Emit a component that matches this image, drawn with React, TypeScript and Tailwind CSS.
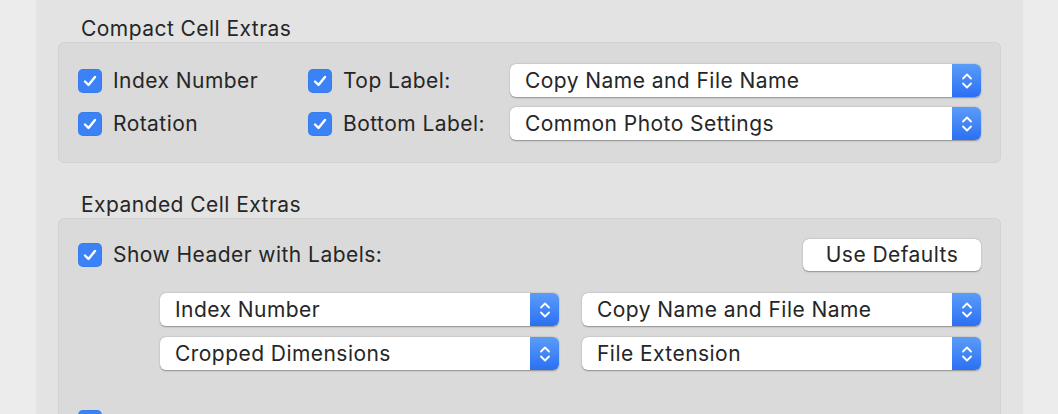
import React from "react";

const font = { fontFamily: "Inter, 'Noto Sans', sans-serif" };

function Check() {
  return (
    <div className="w-[24px] h-[24px] rounded-[5px] bg-[#3a82f6] flex items-center justify-center shrink-0 shadow-[inset_0_0_0_0.5px_rgba(0,0,0,0.08)]">
      <svg width="14" height="12" viewBox="0 0 14 12" fill="none">
        <path d="M2 6.5 L5.5 10 L12 2" stroke="white" strokeWidth="2.4" strokeLinecap="round" strokeLinejoin="round" />
      </svg>
    </div>
  );
}

function Select({ label, className = "" }: { label: string; className?: string }) {
  return (
    <div className={"h-[33px] flex rounded-[6px] bg-white shadow-[0_0.5px_1.5px_rgba(0,0,0,0.35)] " + className}>
      <div className="flex-1 flex items-center pl-[15px] text-[21px] text-[#262626] tracking-[0.45px]">{label}</div>
      <div className="w-[29px] rounded-r-[6px] bg-gradient-to-b from-[#5b9cf8] to-[#2b6ff4] flex items-center justify-center">
        <svg width="12" height="20" viewBox="0 0 12 20" fill="none">
          <path d="M2 7.5 L6 3.5 L10 7.5" stroke="white" strokeWidth="1.8" strokeLinecap="round" strokeLinejoin="round" />
          <path d="M2 12.5 L6 16.5 L10 12.5" stroke="white" strokeWidth="1.8" strokeLinecap="round" strokeLinejoin="round" />
        </svg>
      </div>
    </div>
  );
}

export default function App() {
  return (
    <div className="w-[1058px] h-[414px] overflow-hidden flex bg-[#ececec]" style={font}>
      <div className="w-[36px] shrink-0 bg-[#ececec]" />
      <div className="w-[987px] shrink-0 bg-[#e3e3e3] px-[22px] pt-[17px] text-[#262626]">
        <div className="h-[24px] leading-[24px] pl-[23px] text-[21px] tracking-[0.45px]">Compact Cell Extras</div>
        <div className="mt-px rounded-[6px] border border-[#d2d2d2] bg-[#dadada] pl-[19px] pr-[19px] pt-[21px] pb-[22px] flex flex-col gap-[10px]">
          <div className="h-[33px] flex items-center">
            <div className="w-[230px] flex items-center gap-[11px]">
              <Check />
              <span className="text-[21px] tracking-[0.45px]">Index Number</span>
            </div>
            <div className="w-[202px] flex items-center gap-[11px]">
              <Check />
              <span className="text-[21px] tracking-[0.45px]">Top Label:</span>
            </div>
            <Select label="Copy Name and File Name" className="flex-1" />
          </div>
          <div className="h-[33px] flex items-center">
            <div className="w-[230px] flex items-center gap-[11px]">
              <Check />
              <span className="text-[21px] tracking-[0.45px]">Rotation</span>
            </div>
            <div className="w-[202px] flex items-center gap-[11px]">
              <Check />
              <span className="text-[21px] tracking-[0.45px]">Bottom Label:</span>
            </div>
            <Select label="Common Photo Settings" className="flex-1" />
          </div>
        </div>

        <div className="mt-[30px] h-[24px] leading-[24px] pl-[23px] text-[21px] tracking-[0.45px]">Expanded Cell Extras</div>
        <div className="mt-px rounded-[6px] border border-[#d2d2d2] bg-[#dadada] pl-[19px] pr-[19px] pt-[20px] pb-[60px] h-[220px]">
          <div className="h-[32px] flex items-center justify-between">
            <div className="flex items-center gap-[11px]">
              <Check />
              <span className="text-[21px] tracking-[0.45px]">Show Header with Labels:</span>
            </div>
            <div className="w-[178px] h-[32px] rounded-[6px] bg-white shadow-[0_0.5px_1.5px_rgba(0,0,0,0.35)] flex items-center justify-center text-[21px] tracking-[0.45px]">
              Use Defaults
            </div>
          </div>
          <div className="mt-[22px] pl-[82px] grid grid-cols-2 gap-x-[23px] gap-y-[11px]">
            <Select label="Index Number" />
            <Select label="Copy Name and File Name" />
            <Select label="Cropped Dimensions" />
            <Select label="File Extension" />
          </div>
          <div className="mt-[40px]">
            <Check />
          </div>
        </div>
      </div>
      <div className="flex-1 bg-[#ececec]" />
    </div>
  );
}
